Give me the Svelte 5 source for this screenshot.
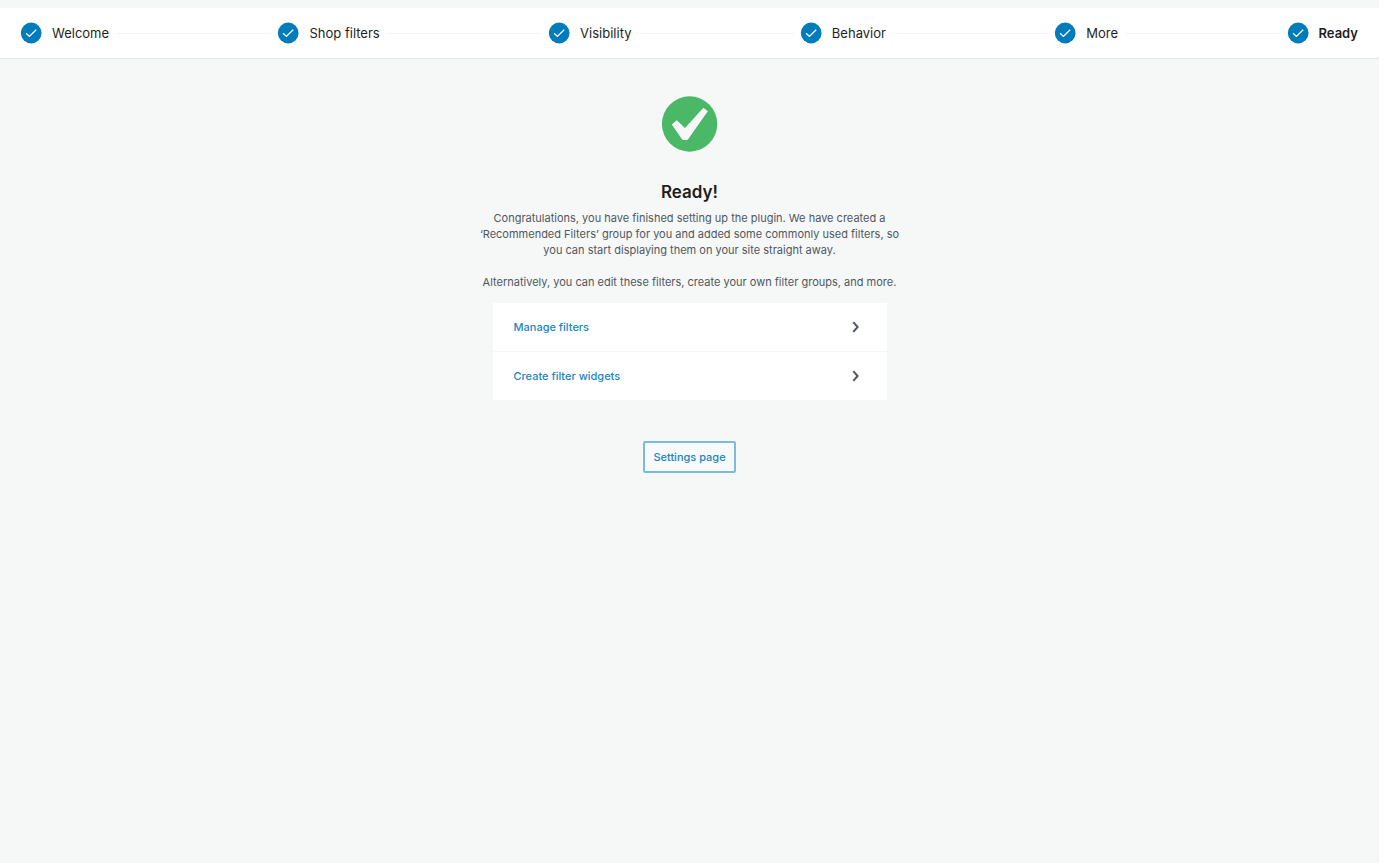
<script>
  const steps = ['Welcome', 'Shop filters', 'Visibility', 'Behavior', 'More', 'Ready'];
  const actions = ['Manage filters', 'Create filter widgets'];
</script>

<div class="page">
  <header>
    <ol class="steps">
      {#each steps as step, i}
        {#if i > 0}
          <li class="line" aria-hidden="true"></li>
        {/if}
        <li class="step" class:active={i === steps.length - 1}>
          <svg width="21" height="21" viewBox="0 0 21 21" aria-hidden="true">
            <circle cx="10.2" cy="10" r="10.4" fill="#007cba" />
            <path d="M5.1 10.2l3.3 3.2 6.8-6.7" fill="none" stroke="#fff" stroke-width="1.3" />
          </svg>
          <span>{step}</span>
        </li>
      {/each}
    </ol>
  </header>

  <main>
    <svg class="done" width="56" height="56" viewBox="0 0 56 56" aria-hidden="true">
      <circle cx="27.6" cy="28" r="27.7" fill="#4ab866" />
      <path d="M9.8 28.6l4.9-4.4 8.3 7.8 18.4-20.2 4.4 3.4-19.5 27.9a2 2 0 0 1-1.6.9h-3.2a2 2 0 0 1-1.7-1z" fill="#f6f8f8" />
    </svg>
    <h1>Ready!</h1>
    <p>
      Congratulations, you have finished setting up the plugin. We have created a
      ‘Recommended Filters’ group for you and added some commonly used filters, so
      you can start displaying them on your site straight away.
    </p>
    <p>Alternatively, you can edit these filters, create your own filter groups, and more.</p>
    <nav>
      {#each actions as action}
        <a href="#top">
          <span>{action}</span>
          <svg width="8" height="12" viewBox="0 0 8 12" aria-hidden="true">
            <path d="M1.3 1.2L5.6 6l-4.3 4.8" fill="none" stroke="#50575e" stroke-width="2" />
          </svg>
        </a>
      {/each}
    </nav>
    <button type="button">Settings page</button>
  </main>
</div>

<style>
  :global(body) {
    background: #fff;
  }
  .page {
    box-sizing: border-box;
    min-height: calc(100vh - 4px);
    margin: 0 5px 4px 0;
    padding-top: 8px;
    background: #f6f8f8;
    font-family: Inter, sans-serif;
    color: #1e1e1e;
  }
  header {
    padding: 0 21px;
    background: #fff;
    border-bottom: 1px solid #e4e6e6;
  }
  .steps {
    display: flex;
    align-items: center;
    gap: 7px;
    height: 50px;
    margin: 0;
    padding: 0;
    list-style: none;
  }
  .step {
    display: flex;
    align-items: center;
    gap: 10px;
    font-size: 13px;
    line-height: 20px;
    white-space: nowrap;
  }
  .step svg,
  .done {
    overflow: visible;
  }
  .active {
    font-weight: 600;
  }
  .line {
    flex: 1;
    height: 1px;
    background: #f5f5f5;
  }
  main {
    display: flex;
    flex-direction: column;
    align-items: center;
    padding: 37px 20px;
  }
  h1 {
    margin: 28px 0 6px;
    font-size: 17px;
    line-height: 24px;
    font-weight: 600;
  }
  p {
    max-width: 424px;
    margin: 0 0 16px;
    font-size: 11px;
    line-height: 16px;
    text-align: center;
    color: #50575e;
  }
  nav {
    width: 100%;
    max-width: 394px;
    margin-top: -3px;
    background: #fff;
  }
  a {
    display: flex;
    align-items: center;
    justify-content: space-between;
    padding: 16px 27px 16px 21px;
    font-size: 11px;
    line-height: 16px;
    font-weight: 500;
    color: #1a87c0;
    text-decoration: none;
  }
  a + a {
    border-top: 1px solid #f6f8f8;
  }
  button {
    margin-top: 41px;
    padding: 7px 8px;
    border: 2px solid #7dbbdc;
    border-radius: 2px;
    background: #f8f9fa;
    font-family: inherit;
    font-size: 11px;
    line-height: 14px;
    font-weight: 500;
    color: #1a87c0;
  }
</style>
